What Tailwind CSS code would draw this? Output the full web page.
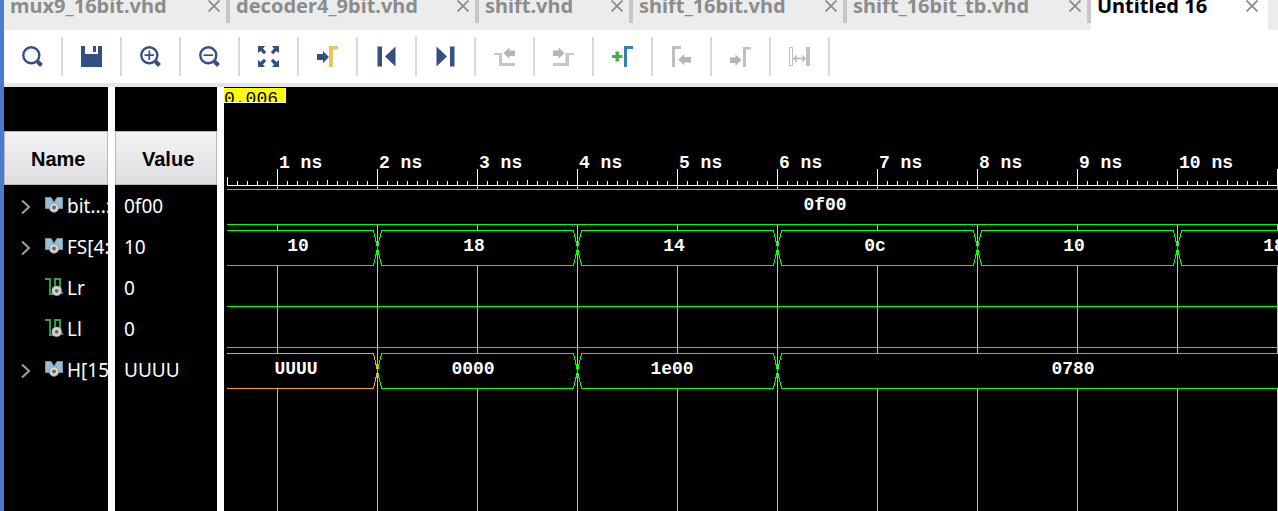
<!DOCTYPE html>
<html lang="en">
<head>
<meta charset="utf-8">
<meta name="viewport" content="width=device-width, initial-scale=1">
<title>Untitled 16</title>
<script src="https://cdn.jsdelivr.net/npm/@tailwindcss/browser@4"></script>
</head>
<body class="flex min-h-screen flex-col overflow-hidden border-l-4 border-[#4a7bd0] bg-white font-['Noto_Sans',sans-serif]">

<svg class="hidden" aria-hidden="true">
  <symbol id="close" viewBox="0 0 12 12"><path d="M.5.5l11 11M11.5.5l-11 11" stroke="#8c8c8c" stroke-width="1.8" fill="none"/></symbol>
  <symbol id="chevron" viewBox="0 0 10 16"><path d="M1 1.5l7 6.5-7 6.5" stroke="#a0a0a0" stroke-width="2" fill="none"/></symbol>
  <symbol id="bus" viewBox="0 0 18 16">
    <path d="M.5.5H6L9 5.500 12 .5h5.500V11.500H13L9 7 6 11.500H.5z" fill="#94bfd6" stroke="#7797a8"/>
    <circle cx="9" cy="10.500" r="4.800" fill="#d4d4d4" stroke="#8a8a8a" stroke-width=".8"/><circle cx="9" cy="10.500" r="1.900" fill="#666"/>
  </symbol>
  <symbol id="wire" viewBox="0 0 18 18">
    <path d="M0 1h5v15h5V1h5v14h3" stroke="#34a04a" stroke-width="1.900" fill="none"/>
    <circle cx="11.700" cy="12.800" r="4.900" fill="#d4d4d4" stroke="#999" stroke-width=".6"/><circle cx="11.700" cy="12.800" r="1.900" fill="#666"/>
  </symbol>
</svg>

<nav class="flex h-[30px] shrink-0 overflow-hidden bg-[#ececec] text-[20px] leading-[26px] font-bold text-[#8c8c8c]" aria-label="Open files">
  <div class="flex h-[23px] w-[226px] shrink-0 items-end justify-between border-r-4 border-[#c6c6c6] pl-[6px] pr-[6px]"><a href="#" class="mb-1">mux9_16bit.vhd</a><button aria-label="Close mux9_16bit.vhd" class="mb-[11px]"><svg class="size-3"><use href="#close"/></svg></button></div>
  <div class="flex h-[23px] w-[249px] shrink-0 items-end justify-between border-r-4 border-[#c6c6c6] pl-[6px] pr-[6px]"><a href="#" class="mb-1">decoder4_9bit.vhd</a><button aria-label="Close decoder4_9bit.vhd" class="mb-[11px]"><svg class="size-3"><use href="#close"/></svg></button></div>
  <div class="flex h-[23px] w-[154px] shrink-0 items-end justify-between border-r-4 border-[#c6c6c6] pl-[6px] pr-[6px]"><a href="#" class="mb-1">shift.vhd</a><button aria-label="Close shift.vhd" class="mb-[11px]"><svg class="size-3"><use href="#close"/></svg></button></div>
  <div class="flex h-[23px] w-[214px] shrink-0 items-end justify-between border-r-4 border-[#c6c6c6] pl-[6px] pr-[6px]"><a href="#" class="mb-1">shift_16bit.vhd</a><button aria-label="Close shift_16bit.vhd" class="mb-[11px]"><svg class="size-3"><use href="#close"/></svg></button></div>
  <div class="flex h-[23px] w-[244px] shrink-0 items-end justify-between border-r-4 border-[#c6c6c6] pl-[6px] pr-[6px]"><a href="#" class="mb-1">shift_16bit_tb.vhd</a><button aria-label="Close shift_16bit_tb.vhd" class="mb-[11px]"><svg class="size-3"><use href="#close"/></svg></button></div>
  <div class="h-[30px] w-[177px] shrink-0 bg-white text-black"><div class="flex h-[23px] items-end justify-between pl-[6px] pr-[10px]"><a href="#" aria-current="page" class="mb-1">Untitled 16</a><button aria-label="Close Untitled 16" class="mb-[11px]"><svg class="size-3"><use href="#close"/></svg></button></div></div>
</nav>

<div role="toolbar" aria-label="Waveform" class="flex shrink-0 border-b-4 border-[#e6e6e6] bg-white py-[7px]">
  <button aria-label="Find" class="grid h-[39px] w-[59px] place-items-center border-r-2 border-[#dadada]"><svg class="size-[21px]" viewBox="0 0 21 21" fill="none" stroke="#344f84"><circle cx="9.300" cy="9.200" r="8" stroke-width="2.400"/><path d="M15.500 15.500l4 4" stroke-width="4"/></svg></button>
  <button aria-label="Save" class="grid h-[39px] w-[59px] place-items-center border-r-2 border-[#dadada]"><svg class="size-[21px]" viewBox="0 0 21 21" fill="#344f84"><path d="M0 0h4v8h13V0h4v21H0z"/><path d="M12 0h3v6h-3z"/></svg></button>
  <button aria-label="Zoom in" class="grid h-[39px] w-[59px] place-items-center border-r-2 border-[#dadada]"><svg class="size-[21px]" viewBox="0 0 21 21" fill="none" stroke="#344f84"><circle cx="9.300" cy="9.200" r="8" stroke-width="2.400"/><path d="M15.500 15.500l4 4" stroke-width="4"/><path d="M4.500 9.200h9.600M9.300 4.400V14" stroke-width="1.700"/></svg></button>
  <button aria-label="Zoom out" class="grid h-[39px] w-[59px] place-items-center border-r-2 border-[#dadada]"><svg class="size-[21px]" viewBox="0 0 21 21" fill="none" stroke="#344f84"><circle cx="9.300" cy="9.200" r="8" stroke-width="2.400"/><path d="M15.500 15.500l4 4" stroke-width="4"/><path d="M4.500 9.200h9.600" stroke-width="1.700"/></svg></button>
  <button aria-label="Zoom fit" class="grid h-[39px] w-[59px] place-items-center border-r-2 border-[#dadada]"><svg class="size-[21px]" viewBox="0 0 21 21" fill="#344f84"><path id="c" d="M0 0h7L5 2.500 8.200 6 6 8.200 2.500 5 0 7z"/><use href="#c" transform="rotate(90 10.500 10.500)"/><use href="#c" transform="rotate(180 10.500 10.500)"/><use href="#c" transform="rotate(270 10.500 10.500)"/></svg></button>
  <button aria-label="Go to cursor" class="grid h-[39px] w-[59px] place-items-center border-r-2 border-[#dadada]"><svg class="size-[21px]" viewBox="0 0 21 21"><path d="M12 0h9v3.500h-5V21h-4z" fill="#dfc862"/><path d="M0 8h6V5l6 6-6 6v-3H0z" fill="#344f84"/></svg></button>
  <button aria-label="Go to start" class="grid h-[39px] w-[59px] place-items-center border-r-2 border-[#dadada]"><svg class="size-[21px]" viewBox="0 0 21 21" fill="#344f84"><path d="M1.500 0.500H6v20H1.500zM19.500 0.500v20L9 10.500z"/></svg></button>
  <button aria-label="Go to end" class="grid h-[39px] w-[59px] place-items-center border-r-2 border-[#dadada]"><svg class="size-[21px]" viewBox="0 0 21 21" fill="#344f84"><path d="M15 0.500h4.500v20H15zM1.500 0.500v20L12 10.500z"/></svg></button>
  <button aria-label="Previous transition" class="grid h-[39px] w-[59px] place-items-center border-r-2 border-[#dadada]"><svg class="size-[21px]" viewBox="0 0 21 21"><path d="M0 7h8v10h13v3H5V9H0z" fill="#c6c6c6"/><path d="M9.500 7l6-5.500v3H21v5.500h-5.500v3z" fill="#b5b5b5"/></svg></button>
  <button aria-label="Next transition" class="grid h-[39px] w-[59px] place-items-center border-r-2 border-[#dadada]"><svg class="size-[21px]" viewBox="0 0 21 21"><path d="M21 7h-8.500v10H0v3h16V9h5z" fill="#c6c6c6"/><path d="M11.500 7l-6-5.500v3H0v5.500h5.500v3z" fill="#b5b5b5"/></svg></button>
  <button aria-label="Add marker" class="grid h-[39px] w-[59px] place-items-center border-r-2 border-[#dadada]"><svg class="size-[21px]" viewBox="0 0 21 21"><path d="M12 0h9v3h-6v18h-3z" fill="#3a7fb4"/><path d="M3.500 5.500h3.500v3.500h3.500v3H7v3.500H3.500V12H0V9h3.500z" fill="#46b04a"/></svg></button>
  <button aria-label="Previous marker" class="grid h-[39px] w-[59px] place-items-center border-r-2 border-[#dadada]"><svg class="size-[21px]" viewBox="0 0 21 21"><path d="M1 0h9v3H4v18H1z" fill="#c0c0c0"/><path d="M7.300 13.500l6-5.500v3H20v5.500h-6.700v3z" fill="#b5b5b5"/></svg></button>
  <button aria-label="Next marker" class="grid h-[39px] w-[59px] place-items-center border-r-2 border-[#dadada]"><svg class="size-[21px]" viewBox="0 0 21 21"><path d="M13 1h8v2.500h-5V21h-3z" fill="#c0c0c0"/><path d="M11.500 14l-6-5.500v3H0V17h5.500v3z" fill="#b5b5b5"/></svg></button>
  <button aria-label="Swap cursors" class="grid h-[39px] w-[59px] place-items-center border-r-2 border-[#dadada]"><svg class="size-[21px]" viewBox="0 0 21 21" fill="none" stroke="#bdbdbd"><path d="M.5 1.500h3v18h-3z"/><path d="M17 1h4v19h-4z" fill="#c0c0c0" stroke="none"/><path d="M5 12.500h11M8 9.500l-3 3 3 3M13 9.500l3 3-3 3" stroke="#b5b5b5" stroke-width="1.300"/></svg></button>
</div>

<main class="flex min-h-[424px] flex-1 bg-black text-white">
  <section class="w-[220px] shrink-0 bg-[linear-gradient(to_right,black_104px,white_104px,white_111px,black_111px,black_213px,white_213px)] pt-[44px]">
    <table class="w-full table-fixed border-separate border-spacing-0 text-left text-[19px] leading-[41px]">
      <thead class="font-['Liberation_Sans',sans-serif] text-[20px] text-black">
        <tr>
          <th class="w-[111px] border-r-[7px] border-white p-0 pb-px"><div class="h-[54px] border border-[#b8b8b8] bg-linear-to-b from-[#f3f3f3] to-[#dedee2] pl-[26px] leading-[54px]">Name</div></th>
          <th class="border-r-[7px] border-white p-0 pb-px"><div class="h-[54px] border border-[#b8b8b8] bg-linear-to-b from-[#f3f3f3] to-[#dedee2] pl-[26px] leading-[54px]">Value</div></th>
        </tr>
      </thead>
      <tbody>
        <tr><td class="border-r-[7px] border-white p-0"><div class="flex h-[41px] items-center overflow-hidden whitespace-nowrap pl-[17px]"><button aria-label="Expand bit" class="mr-[14px]"><svg class="h-4 w-[10px]"><use href="#chevron"/></svg></button><svg class="mr-1 mb-[3px] h-4 w-[18px] shrink-0"><use href="#bus"/></svg>bit...:</div></td><td class="border-r-[7px] border-white p-0 pl-[9px]">0f00</td></tr>
        <tr><td class="border-r-[7px] border-white p-0"><div class="flex h-[41px] items-center overflow-hidden whitespace-nowrap pl-[17px]"><button aria-label="Expand FS" class="mr-[14px]"><svg class="h-4 w-[10px]"><use href="#chevron"/></svg></button><svg class="mr-1 mb-[3px] h-4 w-[18px] shrink-0"><use href="#bus"/></svg>FS[4:</div></td><td class="border-r-[7px] border-white p-0 pl-[9px]">10</td></tr>
        <tr><td class="border-r-[7px] border-white p-0"><div class="flex h-[41px] items-center overflow-hidden whitespace-nowrap pl-[41px]"><svg class="mr-1 mb-[3px] size-[18px] shrink-0"><use href="#wire"/></svg>Lr</div></td><td class="border-r-[7px] border-white p-0 pl-[9px]">0</td></tr>
        <tr><td class="border-r-[7px] border-white p-0"><div class="flex h-[41px] items-center overflow-hidden whitespace-nowrap pl-[41px]"><svg class="mr-1 mb-[3px] size-[18px] shrink-0"><use href="#wire"/></svg>Ll</div></td><td class="border-r-[7px] border-white p-0 pl-[9px]">0</td></tr>
        <tr><td class="border-r-[7px] border-white p-0"><div class="flex h-[41px] items-center overflow-hidden whitespace-nowrap pl-[17px]"><button aria-label="Expand H" class="mr-[14px]"><svg class="h-4 w-[10px]"><use href="#chevron"/></svg></button><svg class="mr-1 mb-[3px] h-4 w-[18px] shrink-0"><use href="#bus"/></svg>H[15</div></td><td class="border-r-[7px] border-white p-0 pl-[9px]">UUUU</td></tr>
      </tbody>
    </table>
  </section>

  <section class="relative min-w-0 flex-1 overflow-hidden font-['Liberation_Mono',monospace] text-[18px]">
    <div class="absolute top-px left-0 h-[15px] w-[62px] overflow-hidden border-r border-b border-white bg-[#ffff00] leading-[22px] text-black">0.006</div>
    <svg class="block h-full w-full" role="img" aria-label="Waveforms from 0 to 11 ns">
      <defs>
        <pattern id="ticks" x="53" y="82" width="100" height="17" patternUnits="userSpaceOnUse">
          <path fill="#fff" d="M0 0h1v16h-1zM10 12h1v4h-1zM20 12h1v4h-1zM30 12h1v4h-1zM40 12h1v4h-1zM50 11h1v5h-1zM60 12h1v4h-1zM70 12h1v4h-1zM80 12h1v4h-1zM90 12h1v4h-1zM0 16h100v1H0z"/>
        </pattern>
        <pattern id="grid" x="53" y="0" width="100" height="20" patternUnits="userSpaceOnUse"><path fill="#c0c0c0" d="M0 0h1v20h-1z"/></pattern>
      </defs>
      <g shape-rendering="crispEdges">
        <rect x="3" y="99" width="100%" height="100%" fill="url(#grid)"/>
        <rect x="3" y="82" width="100%" height="17" fill="url(#ticks)"/>
        <path d="M3 90h1v8h-1z" fill="#fff"/>
        <g fill="#000" stroke="#00ff00">
          <path d="M3 102.500H4000V137.500H3"/>
          <path d="M3 143.500H149.500L153.500 161L149.500 178.500H3"/>
          <path id="seg" d="M157.500 143.500H349.500L353.500 161L349.500 178.500H157.500L153.500 161z"/>
          <use href="#seg" x="200"/><use href="#seg" x="400"/><use href="#seg" x="600"/>
          <path d="M4000 143.500H957.500L953.500 161L957.500 178.500H4000"/>
          <path d="M3 219.500H4000M3 260.500H4000"/>
          <use href="#seg" y="123"/><use href="#seg" x="200" y="123"/>
          <path d="M4000 266.500H557.500L553.500 284L557.500 301.500H4000"/>
          <path stroke="#ffa500" d="M3 266.500H149.500L153.500 284L149.500 301.500H3"/>
        </g>
      </g>
      <g fill="#fff" font-weight="700">
        <text x="55" y="81">1 ns</text><text x="155" y="81">2 ns</text><text x="255" y="81">3 ns</text><text x="355" y="81">4 ns</text><text x="455" y="81">5 ns</text><text x="555" y="81">6 ns</text><text x="655" y="81">7 ns</text><text x="755" y="81">8 ns</text><text x="855" y="81">9 ns</text><text x="955" y="81">10 ns</text>
        <g text-anchor="middle">
          <text x="601" y="123">0f00</text>
          <text x="74" y="164">10</text><text x="250" y="164">18</text><text x="450" y="164">14</text><text x="651" y="164">0c</text><text x="850" y="164">10</text><text x="1050" y="164">18</text>
          <text x="72" y="287">UUUU</text><text x="249" y="287">0000</text><text x="448" y="287">1e00</text><text x="849" y="287">0780</text>
        </g>
      </g>
    </svg>
  </section>
</main>
</body>
</html>
